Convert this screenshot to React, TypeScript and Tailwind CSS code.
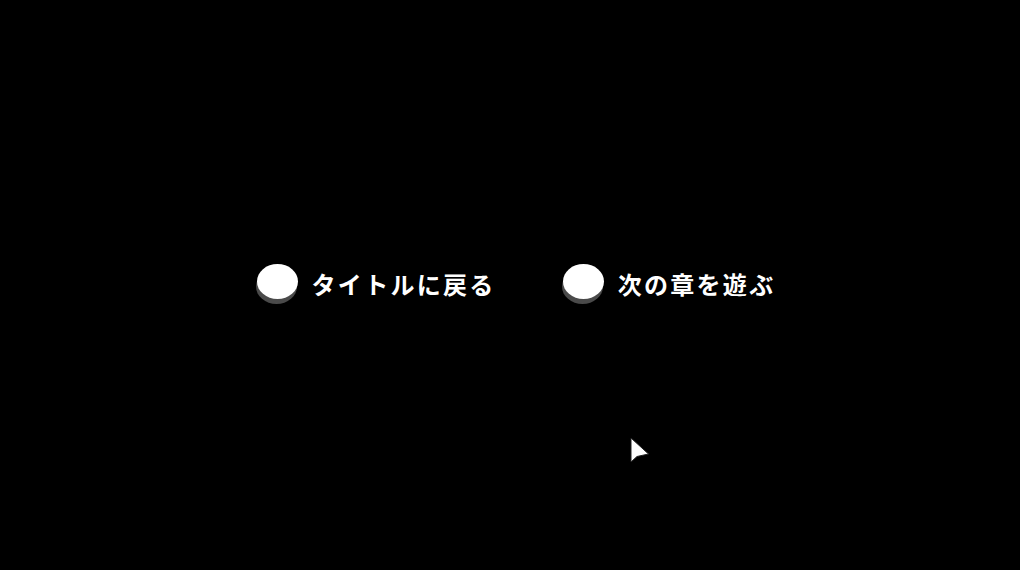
import React from "react";

function MenuButton({ label }: { label: string }) {
  return (
    <button className="flex items-center gap-[14px] bg-transparent p-0 cursor-pointer">
      <span className="relative block w-[41px] h-[35px]">
        <span className="absolute left-[-1px] top-[5px] w-[41px] h-[35px] rounded-[50%] bg-[#4a4a4a] blur-[0.5px]" />
        <span className="absolute inset-0 rounded-[50%] bg-white" />
      </span>
      <span
        className="text-white font-bold text-[24px] leading-none tracking-[2.3px] mt-[4px]"
        style={{ fontFamily: '"Noto Sans CJK JP", "Noto Sans", sans-serif' }}
      >
        {label}
      </span>
    </button>
  );
}

export default function App() {
  return (
    <div className="relative w-[1020px] h-[570px] bg-black overflow-hidden">
      <div className="flex h-full items-start justify-center pt-[264px] pl-[12px]">
        <div className="flex items-center gap-[67px]">
          <MenuButton label="タイトルに戻る" />
          <MenuButton label="次の章を遊ぶ" />
        </div>
      </div>
      {/* mouse pointer */}
      <svg
        className="absolute left-[630px] top-[437px]"
        width="20"
        height="27"
        viewBox="0 0 20 27"
      >
        <path d="M1 1 L1 25 L7 19.5 L18.5 17 Z" fill="white" stroke="#222" strokeWidth="1" strokeLinejoin="round" />
      </svg>
    </div>
  );
}
